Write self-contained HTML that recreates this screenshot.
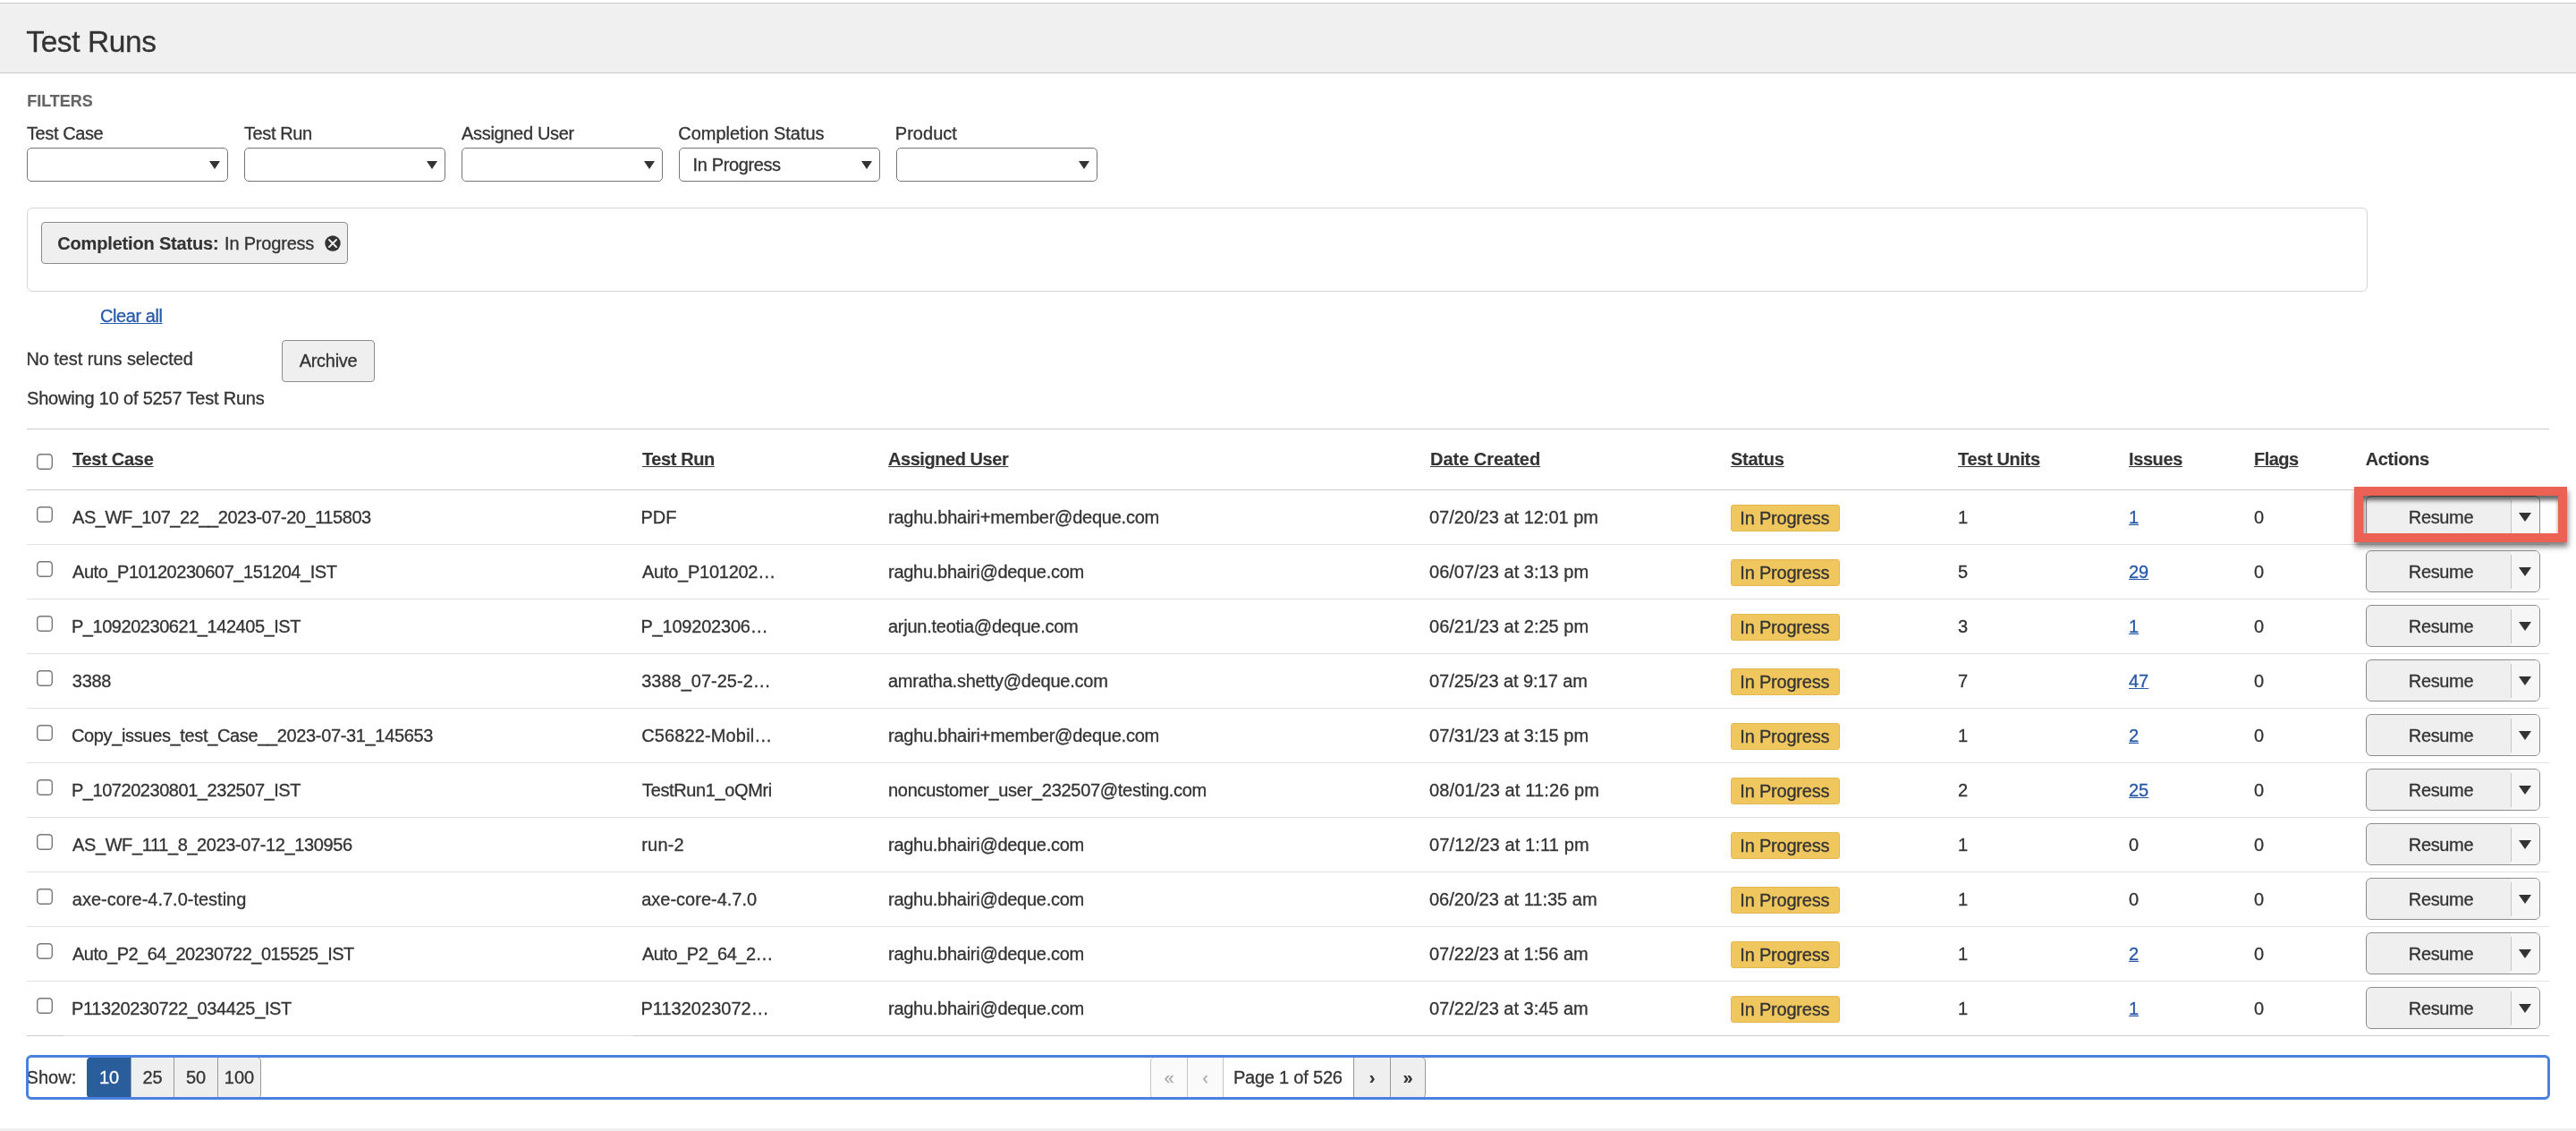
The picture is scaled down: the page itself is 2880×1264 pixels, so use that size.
<!DOCTYPE html>
<html lang="en">
<head>
<meta charset="utf-8">
<title>Test Runs</title>
<style>
*{box-sizing:border-box;}
html,body{margin:0;padding:0;}
body{width:2880px;height:1264px;overflow:hidden;position:relative;background:#fff;
  font-family:"Liberation Sans",sans-serif;font-size:20px;color:#333;-webkit-text-stroke:0.3px currentColor;}
#page{position:absolute;left:0;top:0;width:2880px;height:1264px;will-change:transform;}
.abs{position:absolute;white-space:nowrap;}
.t{position:relative;}
.hdr{left:0;top:3px;width:2880px;height:79px;background:#f0f0f0;border-top:1px solid #c9c9c9;border-bottom:1px solid #c9c9c9;}
h1{margin:0;font-weight:400;font-size:33.5px;line-height:36px;left:30px;top:29px;color:#333;}
.filters{left:30px;top:102px;font-size:18px;line-height:22px;font-weight:700;color:#666;}
.lbl{top:138px;line-height:22px;}
.sel{top:165px;width:225px;height:38px;border:1px solid #767676;border-radius:5px;background:#fff;line-height:36px;padding-left:14px;}
.sel:after{content:"";position:absolute;right:8px;top:14px;border-left:6px solid transparent;border-right:6px solid transparent;border-top:9px solid #333;}
.chipbox{left:30px;top:232px;width:2617px;height:94px;border:1px solid #d6d6d6;border-radius:6px;}
.chip{left:46px;top:248px;width:343px;height:47px;background:#efefef;border:1px solid #8c8c8c;border-radius:4px;line-height:47px;padding-left:18px;}
.chip b{margin-right:7px;}
.chip svg{position:absolute;left:315.5px;top:13.6px;}
a{color:#2759a8;text-decoration:underline;}
.clear{left:112px;top:342px;line-height:22px;}
.nosel{left:30px;top:390px;line-height:22px;}
.archive{left:315px;top:380px;width:104px;height:47px;background:#efefef;border:1px solid #8c8c8c;border-radius:4px;line-height:45px;text-align:center;}
.showing{left:30px;top:434px;line-height:22px;}
table{position:absolute;left:30px;top:479px;width:2820px;border-collapse:collapse;table-layout:fixed;border-top:1px solid #ccc;}
th,td{padding:0 0 0 10px;text-align:left;white-space:nowrap;overflow:visible;position:relative;}
th{height:68px;border-bottom:1px solid #ccc;font-weight:700;line-height:67px;}
th,b,.filters{-webkit-text-stroke:0.15px currentColor;}
u{text-decoration-thickness:1.4px;text-underline-offset:1.2px;}
a{text-decoration-thickness:1.2px;text-underline-offset:1px;}
td{height:61px;border-bottom:1px solid #e2e2e2;line-height:60px;}
tbody tr:last-child td{border-bottom-color:#ccc;}
tbody tr:last-child td.c1{border-bottom-color:#e2e2e2;}
th:first-child,td:first-child{padding-left:0;}
.cb{position:absolute;left:11px;top:18px;width:18px;height:18px;border-radius:4.5px;background:#fff;box-shadow:inset 0 0 0 1.4px #787878;}
th .cb{top:27px;}
.badge{display:inline-block;vertical-align:middle;height:30px;line-height:29px;width:122px;padding-left:10px;background:#f0c75e;border:1px solid #e3b94f;border-radius:3px;margin-top:-2px;}
.rbtn{position:absolute;left:11px;top:6px;width:195px;height:47px;background:#efefef;border:1px solid #8c8c8c;border-radius:6px;line-height:47px;overflow:hidden;}
.rbtn span{position:absolute;left:0;width:162px;text-align:center;}
.rbtn span.t{position:relative;width:auto;}
.rbtn i{position:absolute;left:161px;top:0;width:33px;height:45px;background:#f6f6f6;}
.rbtn i:before{content:"";position:absolute;left:0;top:4px;width:1px;height:38px;background:#c6c6c6;}
.rbtn:after{content:"";position:absolute;left:170px;top:18px;border-left:7px solid transparent;border-right:7px solid transparent;border-top:10px solid #333;}
.redbox{left:2632px;top:544px;width:238px;height:62px;border:10px solid #eb6254;box-shadow:1px 5px 6px rgba(0,0,0,.5), inset 1px 5px 5px rgba(0,0,0,.6);}
.pager{left:29px;top:1179px;width:2822px;height:50px;border:3px solid #4a80e0;border-radius:6px;}
.show{left:30px;top:1193px;line-height:22px;}
.pb{top:1181px;height:47px;line-height:45px;text-align:center;background:#efefef;border:1px solid #999;}
.pb.on{background:#295d9b;color:#fff;border-color:#295d9b;}
.pb.dis{background:#fafafa;color:#aaa;border-color:#c4c4c4;}
.pb.txt{background:#fff;border-left:0;border-right:0;}
.foot{left:0;top:1261px;width:2880px;height:3px;background:#efefef;}
</style>
</head>
<body>
<div id="page">
<div class="abs hdr"></div>
<h1 class="abs"><span class="t" style="letter-spacing:-0.41px;left:-0.7px;">Test Runs</span></h1>
<div class="abs filters"><span class="t" style="letter-spacing:-0.03px;left:0.3px;">FILTERS</span></div>

<div class="abs lbl" style="left:30px"><span class="t" style="letter-spacing:-0.41px;">Test Case</span></div>
<div class="abs lbl" style="left:273px"><span class="t" style="letter-spacing:-0.39px;">Test Run</span></div>
<div class="abs lbl" style="left:516px"><span class="t" style="letter-spacing:-0.32px;">Assigned User</span></div>
<div class="abs lbl" style="left:759px"><span class="t" style="left:-0.8px;">Completion Status</span></div>
<div class="abs lbl" style="left:1002px"><span class="t" style="letter-spacing:0.03px;left:-1.2px;">Product</span></div>
<div class="abs sel" style="left:30px"></div>
<div class="abs sel" style="left:273px"></div>
<div class="abs sel" style="left:516px"></div>
<div class="abs sel" style="left:759px"><span class="t" style="letter-spacing:-0.38px;left:0.6px;">In Progress</span></div>
<div class="abs sel" style="left:1002px"></div>

<div class="abs chipbox"></div>
<div class="abs chip"><b class="t" style="letter-spacing:-0.18px;left:-0.7px;">Completion Status:</b><span class="t" style="letter-spacing:-0.20px;left:-1.0px;">In Progress</span><svg width="18" height="18" viewBox="0 0 18 18"><circle cx="9" cy="9" r="8.7" fill="#333"/><path d="M5 5 L13 13 M13 5 L5 13" stroke="#efefef" stroke-width="1.9" stroke-linecap="round"/></svg></div>
<a class="abs clear"><span class="t" style="letter-spacing:-0.42px;">Clear all</span></a>
<div class="abs nosel"><span class="t" style="letter-spacing:-0.07px;left:-0.6px;">No test runs selected</span></div>
<div class="abs archive"><span class="t" style="letter-spacing:-0.30px;">Archive</span></div>
<div class="abs showing"><span class="t" style="letter-spacing:-0.19px;">Showing 10 of 5257 Test Runs</span></div>

<table>
<colgroup><col style="width:41px"><col style="width:637px"><col style="width:275px"><col style="width:606px"><col style="width:336px"><col style="width:254px"><col style="width:191px"><col style="width:140px"><col style="width:124px"><col></colgroup>
<thead><tr>
<th><span class="cb"></span></th><th class="c1"><u class="t" style="letter-spacing:-0.27px;">Test Case</u></th><th class="c2"><u class="t" style="letter-spacing:-0.41px;">Test Run</u></th><th class="c3"><u class="t" style="letter-spacing:-0.44px;">Assigned User</u></th><th class="c4"><u class="t" style="letter-spacing:-0.02px;">Date Created</u></th><th class="c5"><u class="t" style="letter-spacing:-0.25px;">Status</u></th><th class="c6"><u class="t" style="letter-spacing:-0.35px;">Test Units</u></th><th class="c7"><u class="t" style="letter-spacing:-0.40px;">Issues</u></th><th class="c8"><u class="t" style="letter-spacing:-0.54px;">Flags</u></th><th class="c9"><span class="t" style="letter-spacing:-0.33px;left:0.7px;">Actions</span></th>
</tr></thead>
<tbody>
<tr><td><span class="cb"></span></td><td class="c1"><span class="t" style="letter-spacing:-0.45px;">AS_WF_107_22__2023-07-20_115803</span></td><td class="c2"><span class="t" style="left:-1.6px;">PDF</span></td><td class="c3"><span class="t" style="letter-spacing:-0.24px;">raghu.bhairi+member@deque.com</span></td><td class="c4"><span class="t" style="left:-1.0px;">07/20/23 at 12:01 pm</span></td><td class="c5"><span class="badge"><span class="t" style="letter-spacing:-0.21px;left:-0.7px;">In Progress</span></span></td><td class="c6">1</td><td class="c7"><a>1</a></td><td class="c8">0</td><td class="c9"><div class="rbtn"><span><span class="t" style="letter-spacing:-0.34px;left:2.0px;">Resume</span></span><i></i></div></td></tr>
<tr><td><span class="cb"></span></td><td class="c1"><span class="t" style="letter-spacing:-0.45px;">Auto_P10120230607_151204_IST</span></td><td class="c2"><span class="t" style="letter-spacing:-0.26px;">Auto_P101202…</span></td><td class="c3"><span class="t" style="letter-spacing:-0.27px;">raghu.bhairi@deque.com</span></td><td class="c4"><span class="t" style="letter-spacing:0.01px;left:-1.0px;">06/07/23 at 3:13 pm</span></td><td class="c5"><span class="badge"><span class="t" style="letter-spacing:-0.21px;left:-0.7px;">In Progress</span></span></td><td class="c6">5</td><td class="c7"><a>29</a></td><td class="c8">0</td><td class="c9"><div class="rbtn"><span><span class="t" style="letter-spacing:-0.34px;left:2.0px;">Resume</span></span><i></i></div></td></tr>
<tr><td><span class="cb"></span></td><td class="c1"><span class="t" style="letter-spacing:-0.45px;left:-1.1px;">P_10920230621_142405_IST</span></td><td class="c2"><span class="t" style="letter-spacing:-0.20px;left:-1.6px;">P_109202306…</span></td><td class="c3"><span class="t" style="letter-spacing:-0.26px;">arjun.teotia@deque.com</span></td><td class="c4"><span class="t" style="letter-spacing:0.01px;left:-1.0px;">06/21/23 at 2:25 pm</span></td><td class="c5"><span class="badge"><span class="t" style="letter-spacing:-0.21px;left:-0.7px;">In Progress</span></span></td><td class="c6">3</td><td class="c7"><a>1</a></td><td class="c8">0</td><td class="c9"><div class="rbtn"><span><span class="t" style="letter-spacing:-0.34px;left:2.0px;">Resume</span></span><i></i></div></td></tr>
<tr><td><span class="cb"></span></td><td class="c1"><span class="t" style="letter-spacing:-0.30px;left:-0.2px;">3388</span></td><td class="c2"><span class="t" style="left:-0.8px;">3388_07-25-2…</span></td><td class="c3"><span class="t" style="letter-spacing:-0.25px;">amratha.shetty@deque.com</span></td><td class="c4"><span class="t" style="letter-spacing:-0.05px;left:-1.0px;">07/25/23 at 9:17 am</span></td><td class="c5"><span class="badge"><span class="t" style="letter-spacing:-0.21px;left:-0.7px;">In Progress</span></span></td><td class="c6">7</td><td class="c7"><a>47</a></td><td class="c8">0</td><td class="c9"><div class="rbtn"><span><span class="t" style="letter-spacing:-0.34px;left:2.0px;">Resume</span></span><i></i></div></td></tr>
<tr><td><span class="cb"></span></td><td class="c1"><span class="t" style="letter-spacing:-0.35px;left:-1.1px;">Copy_issues_test_Case__2023-07-31_145653</span></td><td class="c2"><span class="t" style="letter-spacing:0.13px;left:-0.8px;">C56822-Mobil…</span></td><td class="c3"><span class="t" style="letter-spacing:-0.24px;">raghu.bhairi+member@deque.com</span></td><td class="c4"><span class="t" style="letter-spacing:0.01px;left:-1.0px;">07/31/23 at 3:15 pm</span></td><td class="c5"><span class="badge"><span class="t" style="letter-spacing:-0.21px;left:-0.7px;">In Progress</span></span></td><td class="c6">1</td><td class="c7"><a>2</a></td><td class="c8">0</td><td class="c9"><div class="rbtn"><span><span class="t" style="letter-spacing:-0.34px;left:2.0px;">Resume</span></span><i></i></div></td></tr>
<tr><td><span class="cb"></span></td><td class="c1"><span class="t" style="letter-spacing:-0.45px;left:-1.1px;">P_10720230801_232507_IST</span></td><td class="c2"><span class="t" style="letter-spacing:-0.37px;">TestRun1_oQMri</span></td><td class="c3"><span class="t" style="letter-spacing:-0.29px;">noncustomer_user_232507@testing.com</span></td><td class="c4"><span class="t" style="letter-spacing:0.13px;left:-1.0px;">08/01/23 at 11:26 pm</span></td><td class="c5"><span class="badge"><span class="t" style="letter-spacing:-0.21px;left:-0.7px;">In Progress</span></span></td><td class="c6">2</td><td class="c7"><a>25</a></td><td class="c8">0</td><td class="c9"><div class="rbtn"><span><span class="t" style="letter-spacing:-0.34px;left:2.0px;">Resume</span></span><i></i></div></td></tr>
<tr><td><span class="cb"></span></td><td class="c1"><span class="t" style="letter-spacing:-0.39px;">AS_WF_111_8_2023-07-12_130956</span></td><td class="c2"><span class="t" style="letter-spacing:0.20px;left:-0.8px;">run-2</span></td><td class="c3"><span class="t" style="letter-spacing:-0.27px;">raghu.bhairi@deque.com</span></td><td class="c4"><span class="t" style="letter-spacing:0.12px;left:-1.0px;">07/12/23 at 1:11 pm</span></td><td class="c5"><span class="badge"><span class="t" style="letter-spacing:-0.21px;left:-0.7px;">In Progress</span></span></td><td class="c6">1</td><td class="c7">0</td><td class="c8">0</td><td class="c9"><div class="rbtn"><span><span class="t" style="letter-spacing:-0.34px;left:2.0px;">Resume</span></span><i></i></div></td></tr>
<tr><td><span class="cb"></span></td><td class="c1"><span class="t" style="left:-0.2px;">axe-core-4.7.0-testing</span></td><td class="c2"><span class="t" style="left:-0.8px;">axe-core-4.7.0</span></td><td class="c3"><span class="t" style="letter-spacing:-0.27px;">raghu.bhairi@deque.com</span></td><td class="c4"><span class="t" style="left:-1.0px;">06/20/23 at 11:35 am</span></td><td class="c5"><span class="badge"><span class="t" style="letter-spacing:-0.21px;left:-0.7px;">In Progress</span></span></td><td class="c6">1</td><td class="c7">0</td><td class="c8">0</td><td class="c9"><div class="rbtn"><span><span class="t" style="letter-spacing:-0.34px;left:2.0px;">Resume</span></span><i></i></div></td></tr>
<tr><td><span class="cb"></span></td><td class="c1"><span class="t" style="letter-spacing:-0.52px;">Auto_P2_64_20230722_015525_IST</span></td><td class="c2"><span class="t" style="letter-spacing:-0.48px;">Auto_P2_64_2…</span></td><td class="c3"><span class="t" style="letter-spacing:-0.27px;">raghu.bhairi@deque.com</span></td><td class="c4"><span class="t" style="letter-spacing:-0.01px;left:-1.0px;">07/22/23 at 1:56 am</span></td><td class="c5"><span class="badge"><span class="t" style="letter-spacing:-0.21px;left:-0.7px;">In Progress</span></span></td><td class="c6">1</td><td class="c7"><a>2</a></td><td class="c8">0</td><td class="c9"><div class="rbtn"><span><span class="t" style="letter-spacing:-0.34px;left:2.0px;">Resume</span></span><i></i></div></td></tr>
<tr><td><span class="cb"></span></td><td class="c1"><span class="t" style="letter-spacing:-0.36px;left:-1.1px;">P11320230722_034425_IST</span></td><td class="c2"><span class="t" style="letter-spacing:0.02px;left:-1.6px;">P1132023072…</span></td><td class="c3"><span class="t" style="letter-spacing:-0.27px;">raghu.bhairi@deque.com</span></td><td class="c4"><span class="t" style="letter-spacing:-0.01px;left:-1.0px;">07/22/23 at 3:45 am</span></td><td class="c5"><span class="badge"><span class="t" style="letter-spacing:-0.21px;left:-0.7px;">In Progress</span></span></td><td class="c6">1</td><td class="c7"><a>1</a></td><td class="c8">0</td><td class="c9"><div class="rbtn"><span><span class="t" style="letter-spacing:-0.34px;left:2.0px;">Resume</span></span><i></i></div></td></tr>
</tbody>
</table>

<div class="abs redbox"></div>

<div class="abs show"><span class="t" style="left:-0.4px;">Show:</span></div>
<div class="abs pb on" style="left:97px;width:50px;border-radius:5px 0 0 5px">10</div>
<div class="abs pb" style="left:146px;width:49px">25</div>
<div class="abs pb" style="left:194px;width:50px">50</div>
<div class="abs pb" style="left:243px;width:49px;border-radius:0 5px 5px 0">100</div>
<div class="abs pb dis" style="left:1286px;width:42px;border-radius:5px 0 0 5px">«</div>
<div class="abs pb dis" style="left:1327px;width:41px">‹</div>
<div class="abs pb txt" style="left:1368px;width:145px"><span class="t" style="letter-spacing:-0.21px;left:-0.7px;">Page 1 of 526</span></div>
<div class="abs pb" style="left:1513px;width:42px"><b>›</b></div>
<div class="abs pb" style="left:1554px;width:40px;border-radius:0 5px 5px 0"><b>»</b></div>
<div class="abs pager"></div>
<div class="abs foot"></div>
</div>
</body>
</html>
